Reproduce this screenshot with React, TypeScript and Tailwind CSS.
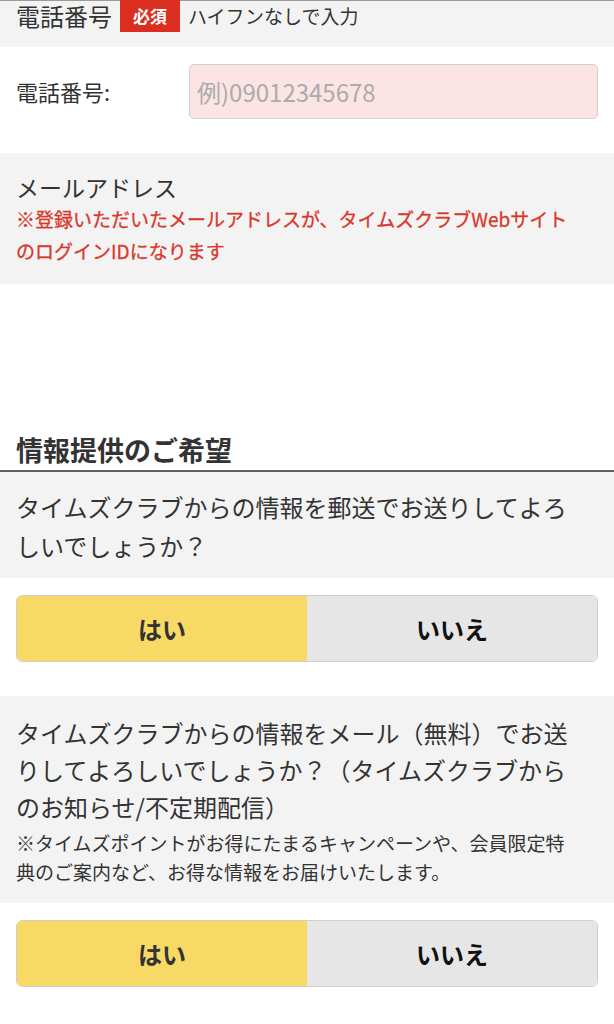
const YesNo = () => (
  <div className="mx-4 grid h-[67px] grid-cols-2 overflow-hidden rounded-[6px] border border-[#cfcfcf]">
    <div className="flex items-center justify-center bg-[#f8d966] text-[24px] font-bold text-[#333]">はい</div>
    <div className="flex items-center justify-center bg-[#e6e6e6] text-[24px] font-bold text-[#111]">いいえ</div>
  </div>
)

export default function App() {
  return (
    <div className="min-h-[1024px] w-[614px] bg-white font-['Noto_Sans_CJK_JP','Noto_Sans',sans-serif] text-[#333]">
      {/* phone header */}
      <div className="flex h-[47px] items-start border-t border-[#9a9a9a] bg-[#f3f3f3] pl-4">
        <span className="text-[24px] leading-[29px]">電話番号</span>
        <span className="ml-2 -mt-px flex h-[32px] w-[60px] items-center justify-center bg-[#da2e21] text-[17px] font-bold text-white">
          必須
        </span>
        <span className="ml-2 text-[19px] leading-[29px]">ハイフンなしで入力</span>
      </div>

      {/* phone input */}
      <div className="flex items-center pl-4 pr-4 pt-[17px] pb-[34px]">
        <span className="w-[173px] shrink-0 text-[22px]">電話番号:</span>
        <input
          className="h-[55px] w-full rounded-[5px] border border-[#d0d0d0] bg-[#fce4e4] px-[7px] text-[24px] placeholder:text-[#ababab]"
          placeholder="例)09012345678"
        />
      </div>

      {/* email */}
      <div className="bg-[#f3f3f3] pl-4 pr-[32px] pt-[18px] pb-[17px]">
        <div className="text-[23px] leading-[32px]">メールアドレス</div>
        <div className="text-[19px] leading-[32px] text-[#d8382c] [-webkit-text-stroke:0.3px_#d8382c]">
          ※登録いただいたメールアドレスが、タイムズクラブWebサイトのログインIDになります
        </div>
      </div>

      {/* heading */}
      <div className="mt-[148px] border-b-2 border-[#5f5f5f] pb-[2px] pl-4 text-[27px] font-bold leading-[36px]">
        情報提供のご希望
      </div>

      {/* postal */}
      <div className="bg-[#f3f3f3] pl-4 pr-[32px] pt-[15px] pb-[13px] text-[24px] leading-[39px]">
        タイムズクラブからの情報を郵送でお送りしてよろしいでしょうか？
      </div>
      <div className="mt-[17px]">
        <YesNo />
      </div>

      {/* mail */}
      <div className="mt-[34px] bg-[#f3f3f3] pl-4 pr-[32px] pt-[18px] pb-[17px]">
        <div className="text-[24px] leading-[37px]">
          タイムズクラブからの情報をメール（無料）でお送りしてよろしいでしょうか？（タイムズクラブからのお知らせ/不定期配信）
        </div>
        <div className="mt-[3px] text-[19px] leading-[29px]">
          ※タイムズポイントがお得にたまるキャンペーンや、会員限定特典のご案内など、お得な情報をお届けいたします。
        </div>
      </div>
      <div className="mt-[17px]">
        <YesNo />
      </div>
    </div>
  )
}
